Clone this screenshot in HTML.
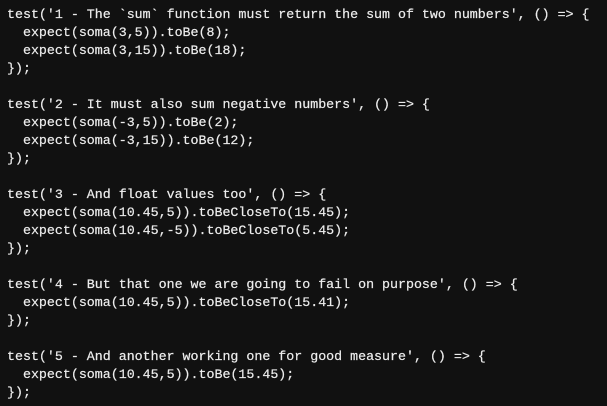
<!DOCTYPE html>
<html><head><style>
html,body{margin:0;padding:0;background:#111111;width:607px;height:406px;overflow:hidden}
pre{margin:0;padding:6px 0 0 7px;font-family:"Liberation Mono",monospace;font-size:13.3px;line-height:18px;color:#ededed;-webkit-text-stroke:0.2px #ededed}
</style></head><body><pre>test('1 - The `sum` function must return the sum of two numbers', () =&gt; {
  expect(soma(3,5)).toBe(8);
  expect(soma(3,15)).toBe(18);
});

test('2 - It must also sum negative numbers', () =&gt; {
  expect(soma(-3,5)).toBe(2);
  expect(soma(-3,15)).toBe(12);
});

test('3 - And float values too', () =&gt; {
  expect(soma(10.45,5)).toBeCloseTo(15.45);
  expect(soma(10.45,-5)).toBeCloseTo(5.45);
});

test('4 - But that one we are going to fail on purpose', () =&gt; {
  expect(soma(10.45,5)).toBeCloseTo(15.41);
});

test('5 - And another working one for good measure', () =&gt; {
  expect(soma(10.45,5)).toBe(15.45);
});</pre></body></html>
